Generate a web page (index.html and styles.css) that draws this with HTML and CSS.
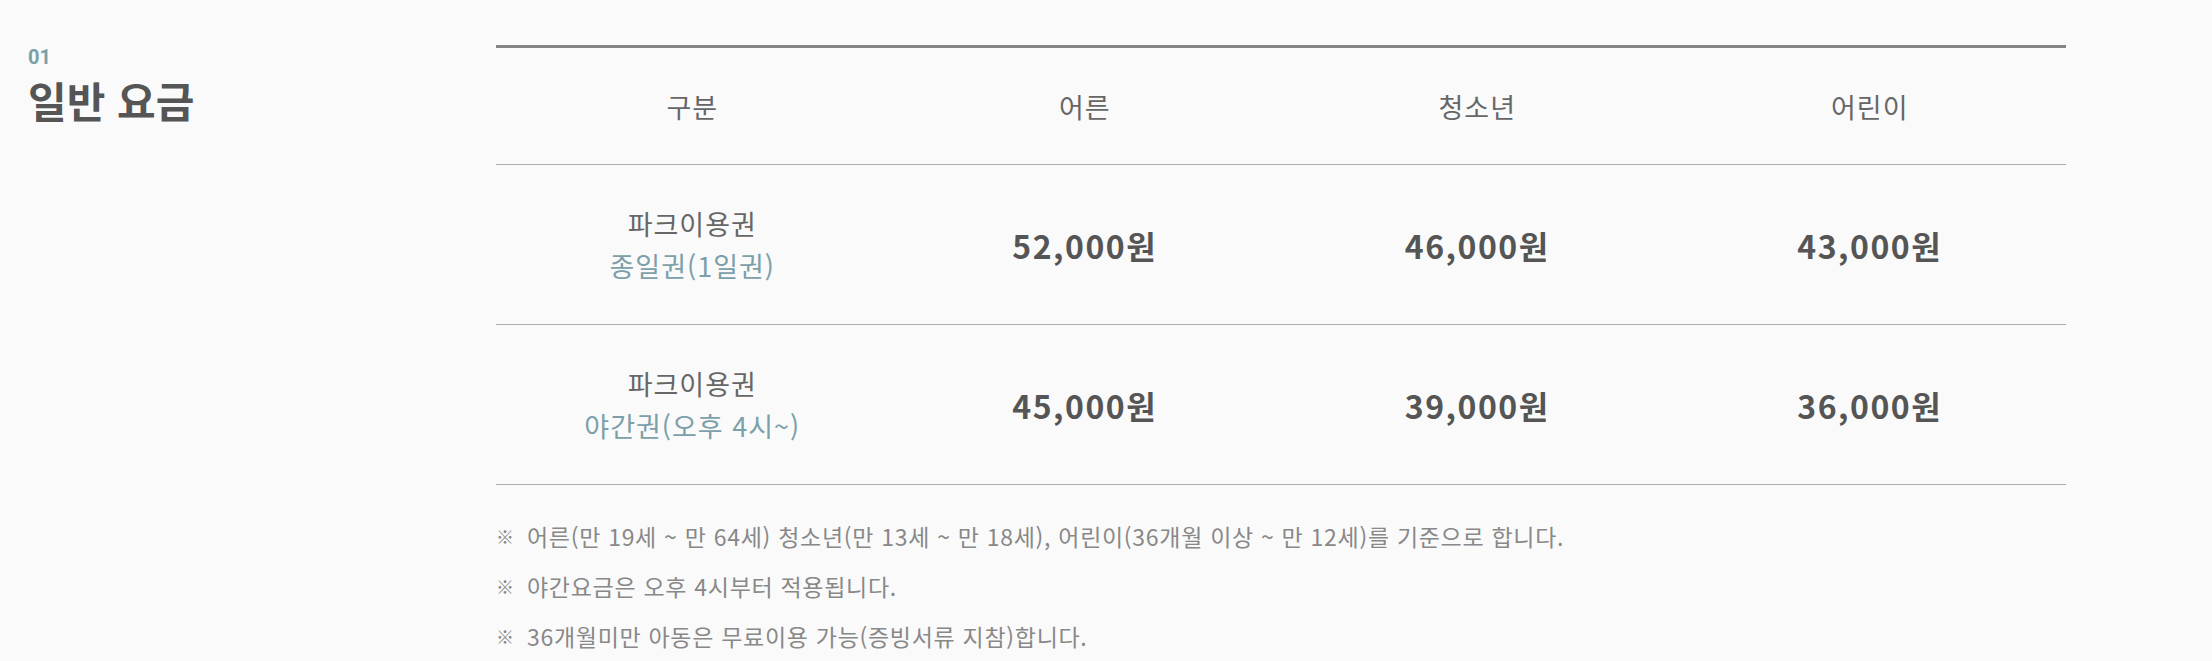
FILE: index.html
```html
<!DOCTYPE html>
<html lang="ko">
<head>
<meta charset="utf-8">
<title>일반 요금</title>
<link rel="stylesheet" href="styles.css">
</head>
<body>
<section class="fee">
  <div class="fee-head">
    <span class="fee-num">01</span>
    <h2 class="fee-title">일반 요금</h2>
  </div>
  <div class="fee-body">
    <table class="fee-table">
      <thead>
        <tr>
          <th>구분</th>
          <th>어른</th>
          <th>청소년</th>
          <th>어린이</th>
        </tr>
      </thead>
      <tbody>
        <tr>
          <td class="label">파크이용권<br><span class="sub">종일권(1일권)</span></td>
          <td class="price">52,000원</td>
          <td class="price">46,000원</td>
          <td class="price">43,000원</td>
        </tr>
        <tr>
          <td class="label">파크이용권<br><span class="sub">야간권(오후 4시~)</span></td>
          <td class="price">45,000원</td>
          <td class="price">39,000원</td>
          <td class="price">36,000원</td>
        </tr>
      </tbody>
    </table>
    <ul class="notes">
      <li><span class="mark">※</span>어른(만 19세 ~ 만 64세) 청소년(만 13세 ~ 만 18세), 어린이(36개월 이상 ~ 만 12세)를 기준으로 합니다.</li>
      <li><span class="mark">※</span>야간요금은 오후 4시부터 적용됩니다.</li>
      <li><span class="mark">※</span>36개월미만 아동은 무료이용 가능(증빙서류 지참)합니다.</li>
    </ul>
  </div>
</section>
</body>
</html>
```

FILE: styles.css
```css
html, body {
  margin: 0;
  padding: 0;
  background: #fafafa;
}
body {
  font-family: "Noto Sans CJK KR", "Noto Sans", sans-serif;
  color: #666;
}
.fee {
  display: flex;
  padding: 45px 146px 0 28px;
}
.fee-head {
  width: 468px;
  flex: none;
  display: flex;
  flex-direction: column;
}
.fee-num {
  font-family: Roboto, "Noto Sans", sans-serif;
  font-size: 20px;
  font-weight: 700;
  color: #7ba0a9;
  line-height: 24px;
}
.fee-title {
  margin: 6px 0 0;
  font-size: 42px;
  font-weight: 700;
  color: #555;
  line-height: 50px;
}
.fee-body {
  flex: 1;
}
.fee-table {
  width: 100%;
  border-collapse: collapse;
  table-layout: fixed;
  border-top: 3px solid #858585;
}
.fee-table th {
  height: 116px;
  font-size: 27px;
  letter-spacing: 1px;
  font-weight: 400;
  color: #666;
  border-bottom: 1px solid #ababab;
  text-align: center;
  padding: 0;
}
.fee-table td {
  height: 159px;
  border-bottom: 1px solid #ababab;
  text-align: center;
  padding: 0;
}
.label {
  font-size: 27px;
  letter-spacing: 1px;
  line-height: 42px;
  color: #666;
}
.sub {
  color: #7ba0a9;
}
.price {
  font-size: 32px;
  letter-spacing: 1.5px;
  font-weight: 700;
  color: #555;
}
.notes {
  list-style: none;
  margin: 26px 0 0;
  padding: 0;
}
.notes li {
  font-size: 23px;
  letter-spacing: 0.7px;
  line-height: 50px;
  color: #888;
  display: flex;
}
.mark {
  width: 31px;
  flex: none;
  font-size: 18px;
  letter-spacing: 0;
}
```
